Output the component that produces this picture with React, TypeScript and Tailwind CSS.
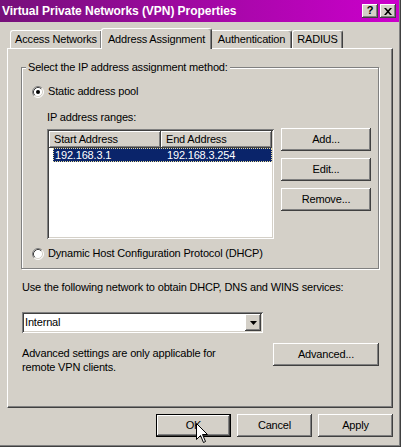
import React from "react";

const raised =
  "bg-[#d4d0c8] shadow-[inset_-1px_-1px_0_#404040,inset_1px_1px_0_#ffffff,inset_-2px_-2px_0_#808080,inset_2px_2px_0_#d4d0c8]";
const sunken =
  "shadow-[inset_1px_1px_0_#808080,inset_-1px_-1px_0_#ffffff,inset_2px_2px_0_#404040,inset_-2px_-2px_0_#d4d0c8]";

function Radio({ checked }: { checked?: boolean }) {
  return (
    <svg width="12" height="12" viewBox="0 0 12 12" className="shrink-0">
      <circle cx="6" cy="6" r="5" fill="#ffffff" />
      <path d="M2.11 9.89 A5.5 5.5 0 0 1 9.89 2.11" stroke="#808080" strokeWidth="1" fill="none" />
      <path d="M9.89 2.11 A5.5 5.5 0 0 1 2.11 9.89" stroke="#ffffff" strokeWidth="1" fill="none" />
      <path d="M2.82 9.18 A4.5 4.5 0 0 1 9.18 2.82" stroke="#404040" strokeWidth="1" fill="none" />
      <path d="M9.18 2.82 A4.5 4.5 0 0 1 2.82 9.18" stroke="#d4d0c8" strokeWidth="1" fill="none" />
      {checked && <circle cx="6" cy="6" r="2" fill="#000000" />}
    </svg>
  );
}

export default function App() {
  return (
    <div className="relative w-[401px] h-[447px] overflow-hidden bg-[#d4d0c8] text-[11px] leading-[13px] tracking-[-0.17px] text-black font-['Liberation_Sans',Arial,sans-serif] flex flex-col shadow-[inset_-1px_-1px_0_#404040,inset_-2px_-2px_0_#808080]">
      {/* Title bar */}
      <div className="h-[22px] mr-[2px] flex items-center justify-between pl-[2px] pr-[3px] bg-linear-to-r/srgb from-[#76107a] to-[#cc00cc]">
        <span className="text-white font-bold text-[12px] leading-[14px] tracking-[-0.05px]">
          Virtual Private Networks (VPN) Properties
        </span>
        <div className="flex gap-[2px]">
          <div className={raised + " w-[16px] h-[14px] flex items-center justify-center font-bold text-[11px] leading-[11px] pb-[1px]"}>
            ?
          </div>
          <div className={raised + " w-[16px] h-[14px] flex items-center justify-center"}>
            <svg width="8" height="7" viewBox="0 0 8 7">
              <path d="M0 0h2l2 2.2L6 0h2L5 3.5 8 7H6L4 4.8 2 7H0l3-3.5z" fill="#000" />
            </svg>
          </div>
        </div>
      </div>

      {/* Tabs */}
      <div className="mt-[6px] h-[20px] ml-[10px] flex items-end">
        <div className="w-[91px] h-[18px] flex items-center justify-center border-t border-l border-white rounded-tl-[3px] shadow-[inset_-1px_0_0_#808080]">
          Access Networks
        </div>
        <div className="relative z-10 w-[111px] h-[21px] -mb-px flex items-start pt-[4px] justify-center bg-[#d4d0c8] border-t border-l border-white border-r border-r-[#404040] rounded-t-[3px] shadow-[inset_-1px_0_0_#808080]">
          Address Assignment
        </div>
        <div className="w-[80px] h-[18px] flex items-center justify-center border-t border-white border-r border-r-[#404040] rounded-tr-[3px] shadow-[inset_-1px_0_0_#808080]">
          Authentication
        </div>
        <div className="w-[51px] h-[18px] flex items-center justify-center border-t border-l border-white border-r border-r-[#404040] rounded-t-[3px] shadow-[inset_-1px_0_0_#808080]">
          RADIUS
        </div>
      </div>

      {/* Panel */}
      <div className="ml-[7px] w-[386px] h-[360px] border border-t-white border-l-white border-r-[#404040] border-b-[#404040] shadow-[inset_-1px_-1px_0_#808080] flex flex-col pl-[13px] pt-[18px]">
        {/* Group box */}
        <div className="relative w-[358px] h-[202px] border border-[#808080] shadow-[inset_1px_1px_0_#ffffff,1px_1px_0_#ffffff] flex flex-col pl-[10px] pt-[17px]">
          <span className="absolute left-[4px] -top-[7px] px-[2px] bg-[#d4d0c8]">
            Select the IP address assignment method:
          </span>
          <div className="h-[13px] flex items-center gap-[4px]">
            <Radio checked />
            <span>Static address pool</span>
          </div>
          <div className="mt-[13px] pl-[15px]">IP address ranges:</div>
          <div className="mt-[4px] pl-[15px] flex items-start">
            <div className={sunken + " mt-[1px] w-[227px] h-[110px] bg-white p-[2px] flex flex-col"}>
              <div className="h-[17px] flex shrink-0">
                <div className={raised + " w-[112px] flex items-center pl-[5px]"}>Start Address</div>
                <div className={raised + " w-[111px] flex items-center pl-[5px]"}>End Address</div>
              </div>
              <div className="ml-[4px] h-[14px] flex items-center bg-[#0a246a] text-white outline-1 outline-dotted outline-[#e8dc98] -outline-offset-1">
                <span className="w-[108px] pl-[2px]">192.168.3.1</span>
                <span className="pl-[6px]">192.168.3.254</span>
              </div>
            </div>
            <div className="ml-[7px] flex flex-col gap-[7px]">
              <div className={raised + " w-[90px] h-[23px] flex items-center justify-center"}>Add...</div>
              <div className={raised + " w-[90px] h-[23px] flex items-center justify-center"}>Edit...</div>
              <div className={raised + " w-[90px] h-[23px] flex items-center justify-center"}>Remove...</div>
            </div>
          </div>
          <div className="mt-[8px] h-[13px] flex items-center gap-[4px]">
            <Radio />
            <span>Dynamic Host Configuration Protocol (DHCP)</span>
          </div>
        </div>

        <div className="mt-[12px] ml-[1px]">
          Use the following network to obtain DHCP, DNS and WINS services:
        </div>

        <div className={sunken + " mt-[18px] ml-[1px] w-[241px] h-[21px] bg-white p-[2px] flex"}>
          <div className="flex-1 flex items-center pl-[1px]">Internal</div>
          <div className={raised + " w-[16px] h-full flex items-center justify-center"}>
            <svg width="7" height="4" viewBox="0 0 7 4">
              <polygon points="0,0 7,0 3.5,4" fill="#000" />
            </svg>
          </div>
        </div>

        <div className="mt-[10px] w-[358px] flex justify-between items-start">
          <div className="ml-[1px] mt-[3px] leading-[14px]">
            <div>Advanced settings are only applicable for</div>
            <div>remote VPN clients.</div>
          </div>
          <div className={raised + " w-[106px] h-[23px] flex items-center justify-center"}>Advanced...</div>
        </div>
      </div>

      {/* Footer buttons */}
      <div className="mt-[6px] pl-[156px] flex gap-[6px]">
        <div className={raised + " w-[75px] h-[23px] border border-black flex items-center justify-center"}>OK</div>
        <div className={raised + " w-[75px] h-[23px] flex items-center justify-center"}>Cancel</div>
        <div className={raised + " w-[75px] h-[23px] flex items-center justify-center"}>Apply</div>
      </div>

      {/* Mouse cursor */}
      <svg className="absolute left-[196px] top-[423px]" width="13" height="21" viewBox="0 0 13 21">
        <path d="M0.5 0.5 L0.5 16.5 L4.5 12.5 L7.5 19.5 L9.5 18.5 L6.5 11.5 L11.5 11.5 Z" fill="#ffffff" stroke="#000000" strokeWidth="1" strokeLinejoin="miter" />
      </svg>
    </div>
  );
}
